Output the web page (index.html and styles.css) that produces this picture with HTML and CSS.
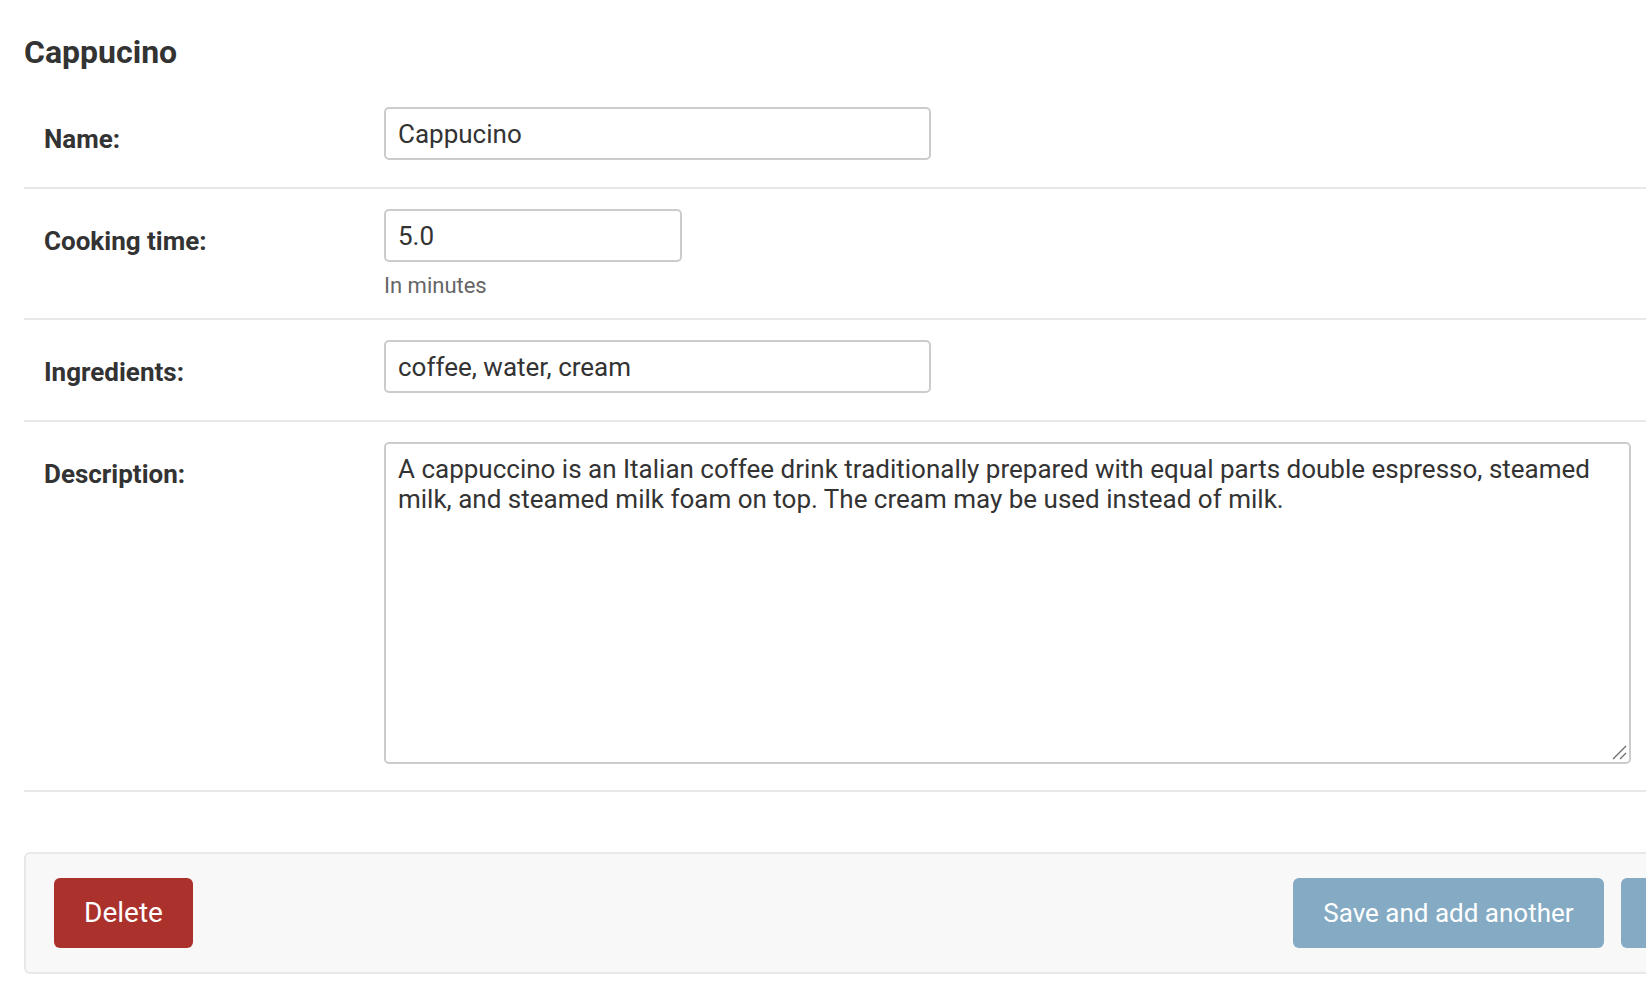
FILE: index.html
```html
<!DOCTYPE html>
<html lang="en">
<head>
<meta charset="utf-8">
<title>Change recipe | Cappucino</title>
<link rel="stylesheet" href="styles.css">
</head>
<body>
<div class="page">
  <h2 class="title">Cappucino</h2>
  <form class="change-form">
    <fieldset class="module">
      <div class="form-row">
        <label class="row-label" for="id_name">Name:</label>
        <div class="field">
          <input class="text-input w-wide" type="text" id="id_name" value="Cappucino">
        </div>
      </div>
      <div class="form-row">
        <label class="row-label" for="id_cooking_time">Cooking time:</label>
        <div class="field">
          <input class="text-input w-short" type="text" id="id_cooking_time" value="5.0">
          <div class="help">In minutes</div>
        </div>
      </div>
      <div class="form-row">
        <label class="row-label" for="id_ingredients">Ingredients:</label>
        <div class="field">
          <input class="text-input w-wide" type="text" id="id_ingredients" value="coffee, water, cream">
        </div>
      </div>
      <div class="form-row">
        <label class="row-label" for="id_description">Description:</label>
        <div class="field">
          <div class="area-wrap">
            <textarea class="text-area" id="id_description">A cappuccino is an Italian coffee drink traditionally prepared with equal parts double espresso, steamed milk, and steamed milk foam on top. The cream may be used instead of milk.</textarea>
            <svg class="resizer" width="15" height="15" viewBox="0 0 15 15" aria-hidden="true">
              <line x1="14" y1="1" x2="1" y2="14" stroke="#6b6b6b" stroke-width="1.3"/>
              <line x1="14" y1="8" x2="8" y2="14" stroke="#6b6b6b" stroke-width="1.3"/>
            </svg>
          </div>
        </div>
      </div>
    </fieldset>
    <div class="submit-row">
      <a class="btn btn-delete" href="#">Delete</a>
      <button class="btn btn-secondary" type="button">Save and add another</button>
      <button class="btn btn-secondary" type="button">Save and continue editing</button>
      <button class="btn btn-default" type="button">Save</button>
    </div>
  </form>
</div>
</body>
</html>
```

FILE: styles.css
```css
html, body {
  margin: 0;
  padding: 0;
  background: #ffffff;
  overflow: hidden;
}

body {
  font-family: Roboto, "Liberation Sans", sans-serif;
  color: #333333;
}

.page {
  width: 2116px;
  padding: 33px 0 0 24px;
}

.title {
  margin: 0 0 16px 0;
  font-size: 32px;
  line-height: 38px;
  font-weight: 700;
  color: #333333;
}

.change-form {
  margin: 0;
}

.module {
  margin: 0;
  padding: 0;
  border: none;
}

.form-row {
  display: flex;
  align-items: flex-start;
  padding: 20px 0 20px 20px;
  border-bottom: 2px solid #e8e8e8;
}

.row-label {
  flex: 0 0 340px;
  padding-top: 17px;
  font-size: 26px;
  line-height: 30px;
  font-weight: 700;
  color: #333333;
}

.field {
  display: flex;
  flex-direction: column;
  align-items: flex-start;
}

.text-input {
  box-sizing: border-box;
  height: 53px;
  margin: 0 0 7px 0;
  padding: 0 12px;
  border: 2px solid #cccccc;
  border-radius: 5px;
  background: #ffffff;
  font-family: Roboto, "Liberation Sans", sans-serif;
  font-size: 26px;
  color: #333333;
  outline: none;
}

.w-wide {
  width: 547px;
}

.w-short {
  width: 298px;
}

.help {
  margin-top: 4px;
  font-size: 22px;
  line-height: 25px;
  color: #666666;
}

.area-wrap {
  position: relative;
  margin: 0 0 6px 0;
}

.text-area {
  box-sizing: border-box;
  display: block;
  width: 1247px;
  height: 322px;
  margin: 0;
  padding: 10px 12px 8px 12px;
  border: 2px solid #cccccc;
  border-radius: 5px;
  background: #ffffff;
  font-family: Roboto, "Liberation Sans", sans-serif;
  font-size: 26px;
  line-height: 30px;
  color: #333333;
  resize: none;
  outline: none;
}

.resizer {
  position: absolute;
  right: 4px;
  bottom: 4px;
  pointer-events: none;
}

.submit-row {
  display: flex;
  align-items: center;
  gap: 17px;
  margin-top: 60px;
  padding: 24px 28px 24px 28px;
  background: #f8f8f8;
  border: 2px solid #e8e8e8;
  border-radius: 6px;
}

.btn {
  box-sizing: border-box;
  display: inline-block;
  height: 70px;
  padding: 20px 30px;
  border: none;
  border-radius: 6px;
  font-family: Roboto, "Liberation Sans", sans-serif;
  font-size: 26px;
  line-height: 30px;
  font-weight: 400;
  color: #ffffff;
  text-decoration: none;
  cursor: pointer;
  white-space: nowrap;
}

.btn-delete {
  background: #ab312c;
  margin-right: auto;
  font-size: 28px;
}

.btn-secondary {
  background: #85abc4;
}

.btn-default {
  background: #417690;
}
```
